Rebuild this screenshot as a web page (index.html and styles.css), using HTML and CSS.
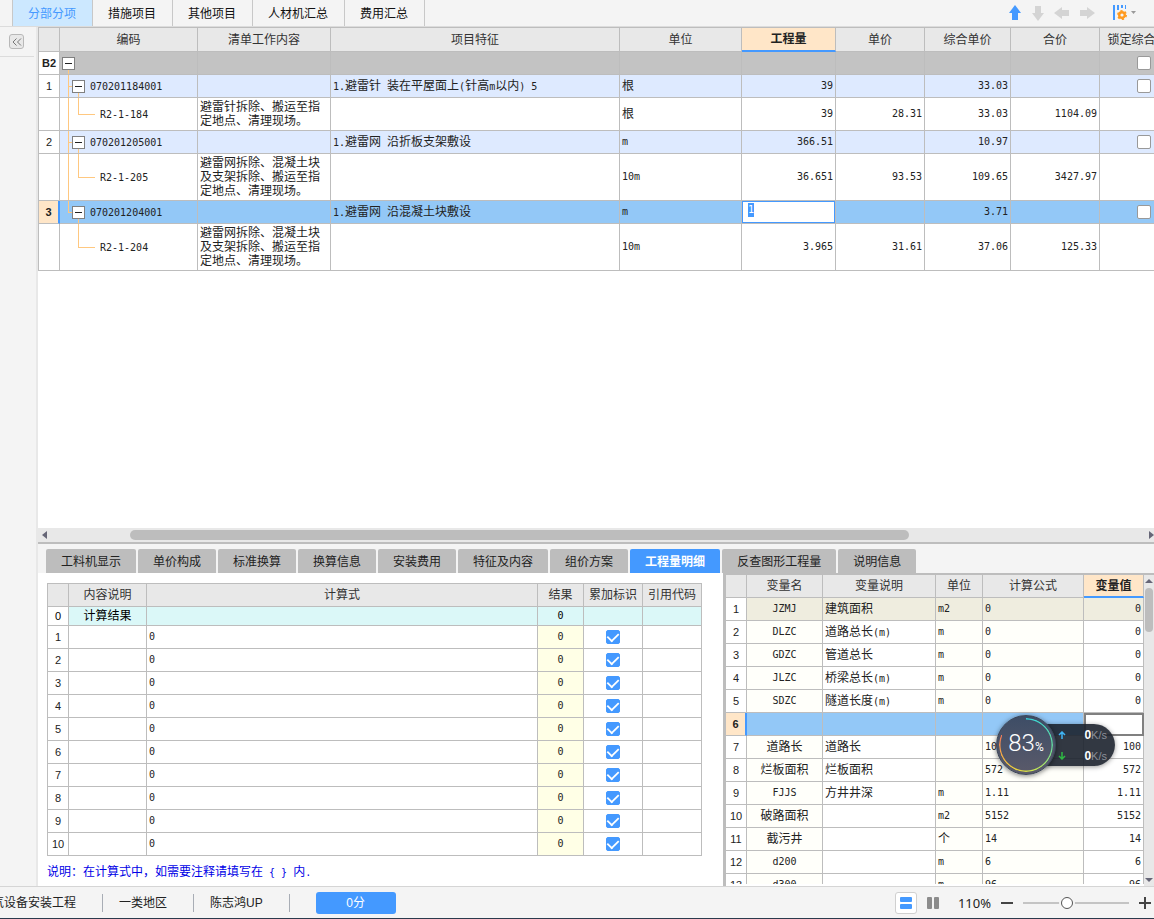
FILE: index.html
```html
<!DOCTYPE html>
<html lang="zh-CN">
<head>
<meta charset="utf-8">
<title>工程计价</title>
<link rel="stylesheet" href="styles.css">
</head>
<body>
<div class="app">
  <header class="topbar">
    <nav class="main-tabs">
      <button class="main-tab active">分部分项</button>
      <button class="main-tab">措施项目</button>
      <button class="main-tab">其他项目</button>
      <button class="main-tab">人材机汇总</button>
      <button class="main-tab">费用汇总</button>
    </nav>
    <div class="tools">
      <button class="tool on" aria-label="上移"><svg width="14" height="16" viewBox="0 0 14 16"><path d="M7 0L13 8H10V15H4V8H1Z"/></svg></button>
      <button class="tool" aria-label="下移"><svg width="14" height="16" viewBox="0 0 14 16"><path d="M4 1H10V8H13L7 16L1 8H4Z"/></svg></button>
      <button class="tool" aria-label="左移"><svg width="16" height="14" viewBox="0 0 16 14"><path d="M0 7L8 1V4H15V10H8V13Z"/></svg></button>
      <button class="tool" aria-label="右移"><svg width="16" height="14" viewBox="0 0 16 14"><path d="M16 7L8 1V4H1V10H8V13Z"/></svg></button>
      <button class="tool columns" aria-label="列设置"><svg width="26" height="16" viewBox="0 0 26 16"><path fill="#4499ff" d="M1 0H3V15H1ZM5 0H7V5H5ZM9 0H11V3H9ZM13 0H14V4H13Z"/><g fill="none" stroke="#ff9a1f"><circle cx="10" cy="10" r="2.8" stroke-width="2.4"/><circle cx="10" cy="10" r="4.2" stroke-width="1.6" stroke-dasharray="2.2 2.2"/></g><path fill="#999" d="M19 6H24L21.500 9Z"/></svg></button>
    </div>
  </header>

  <div class="middle">
    <aside class="side">
      <div class="side-head"><button class="collapse" aria-label="展开"><svg width="10" height="8" viewBox="0 0 10 8" fill="none" stroke="#777"><path d="M4.500 0.500L1 4L4.500 7.500M9 0.500L5.500 4L9 7.500"/></svg></button></div>
    </aside>

    <main class="work">
      <section class="upper">
        <table class="grid bill">
          <colgroup><col class="w21"><col class="w138"><col class="w133"><col class="w289"><col class="w122"><col class="w94"><col class="w89"><col class="w86"><col class="w89"><col class="w88"></colgroup>
          <thead><tr><th></th><th>编码</th><th>清单工作内容</th><th>项目特征</th><th>单位</th><th class="current">工程量</th><th>单价</th><th>综合单价</th><th>合价</th><th>锁定综合单价</th></tr></thead>
          <tbody>
            <tr class="section"><td class="idx strong">B2</td><td class="tree root"><button class="toggle" aria-label="折叠"></button></td><td></td><td></td><td></td><td></td><td></td><td></td><td></td><td class="mid"><input type="checkbox" aria-label="锁定"></td></tr>
            <tr class="item"><td class="idx">1</td><td class="tree node"><button class="toggle" aria-label="折叠"></button><span class="num">070201184001</span></td><td></td><td><span class="num">1.</span>避雷针<span class="num"> </span>装在平屋面上<span class="num">(</span>针高<span class="num">m</span>以内<span class="num">) 5</span></td><td>根</td><td class="num right">39</td><td></td><td class="num right">33.03</td><td></td><td class="mid"><input type="checkbox" aria-label="锁定"></td></tr>
            <tr class="sub two"><td class="idx"></td><td class="tree leaf"><span class="num">R2-1-184</span></td><td>避雷针拆除、搬运至指定地点、清理现场。</td><td></td><td>根</td><td class="num right">39</td><td class="num right">28.31</td><td class="num right">33.03</td><td class="num right">1104.09</td><td></td></tr>
            <tr class="item"><td class="idx">2</td><td class="tree node"><button class="toggle" aria-label="折叠"></button><span class="num">070201205001</span></td><td></td><td><span class="num">1.</span>避雷网<span class="num"> </span>沿折板支架敷设</td><td class="num">m</td><td class="num right">366.51</td><td></td><td class="num right">10.97</td><td></td><td class="mid"><input type="checkbox" aria-label="锁定"></td></tr>
            <tr class="sub three"><td class="idx"></td><td class="tree leaf"><span class="num">R2-1-205</span></td><td>避雷网拆除、混凝土块及支架拆除、搬运至指定地点、清理现场。</td><td></td><td class="num">10m</td><td class="num right">36.651</td><td class="num right">93.53</td><td class="num right">109.65</td><td class="num right">3427.97</td><td></td></tr>
            <tr class="item picked"><td class="idx strong">3</td><td class="tree node last"><button class="toggle" aria-label="折叠"></button><span class="num">070201204001</span></td><td></td><td><span class="num">1.</span>避雷网<span class="num"> </span>沿混凝土块敷设</td><td class="num">m</td><td class="editing"><input class="cell-input" type="text" value="1" aria-label="工程量"></td><td></td><td class="num right">3.71</td><td></td><td class="mid"><input type="checkbox" aria-label="锁定"></td></tr>
            <tr class="sub three"><td class="idx"></td><td class="tree leaf end"><span class="num">R2-1-204</span></td><td>避雷网拆除、混凝土块及支架拆除、搬运至指定地点、清理现场。</td><td></td><td class="num">10m</td><td class="num right">3.965</td><td class="num right">31.61</td><td class="num right">37.06</td><td class="num right">125.33</td><td></td></tr>
          </tbody>
        </table>
      </section>

      <div class="hscroll">
        <svg width="5" height="8" viewBox="0 0 5 8"><path d="M5 0V8L0 4Z"/></svg>
        <div class="htrack"><div class="hthumb"></div></div>
        <svg width="5" height="8" viewBox="0 0 5 8"><path d="M0 0V8L5 4Z"/></svg>
      </div>

      <section class="lower">
        <nav class="sub-tabs">
          <button class="sub-tab">工料机显示</button><button class="sub-tab">单价构成</button><button class="sub-tab">标准换算</button><button class="sub-tab">换算信息</button><button class="sub-tab">安装费用</button><button class="sub-tab">特征及内容</button><button class="sub-tab">组价方案</button><button class="sub-tab active">工程量明细</button><button class="sub-tab">反查图形工程量</button><button class="sub-tab">说明信息</button>
        </nav>
        <div class="panes">
          <div class="detail">
            <table class="grid calc">
              <colgroup><col class="w21"><col class="w78"><col><col class="w46"><col class="w59"><col class="w59"></colgroup>
              <thead><tr><th></th><th>内容说明</th><th>计算式</th><th>结果</th><th>累加标识</th><th>引用代码</th></tr></thead>
              <tbody>
                <tr class="total"><td class="idx">0</td><td class="mid">计算结果</td><td></td><td class="num mid">0</td><td></td><td></td></tr>
                <tr><td class="idx">1</td><td></td><td class="num">0</td><td class="num result">0</td><td class="mid"><input type="checkbox" checked aria-label="累加标识"></td><td></td></tr>
                <tr><td class="idx">2</td><td></td><td class="num">0</td><td class="num result">0</td><td class="mid"><input type="checkbox" checked aria-label="累加标识"></td><td></td></tr>
                <tr><td class="idx">3</td><td></td><td class="num">0</td><td class="num result">0</td><td class="mid"><input type="checkbox" checked aria-label="累加标识"></td><td></td></tr>
                <tr><td class="idx">4</td><td></td><td class="num">0</td><td class="num result">0</td><td class="mid"><input type="checkbox" checked aria-label="累加标识"></td><td></td></tr>
                <tr><td class="idx">5</td><td></td><td class="num">0</td><td class="num result">0</td><td class="mid"><input type="checkbox" checked aria-label="累加标识"></td><td></td></tr>
                <tr><td class="idx">6</td><td></td><td class="num">0</td><td class="num result">0</td><td class="mid"><input type="checkbox" checked aria-label="累加标识"></td><td></td></tr>
                <tr><td class="idx">7</td><td></td><td class="num">0</td><td class="num result">0</td><td class="mid"><input type="checkbox" checked aria-label="累加标识"></td><td></td></tr>
                <tr><td class="idx">8</td><td></td><td class="num">0</td><td class="num result">0</td><td class="mid"><input type="checkbox" checked aria-label="累加标识"></td><td></td></tr>
                <tr><td class="idx">9</td><td></td><td class="num">0</td><td class="num result">0</td><td class="mid"><input type="checkbox" checked aria-label="累加标识"></td><td></td></tr>
                <tr><td class="idx">10</td><td></td><td class="num">0</td><td class="num result">0</td><td class="mid"><input type="checkbox" checked aria-label="累加标识"></td><td></td></tr>
              </tbody>
            </table>
            <p class="note">说明：在计算式中，如需要注释请填写在<span class="num"> { } </span>内<span class="num">.</span></p>
          </div>

          <div class="vars">
            <div class="vars-view">
              <table class="grid var">
                <colgroup><col class="w21"><col class="w76"><col class="w113"><col class="w47"><col class="w101"><col class="w60"></colgroup>
                <thead><tr><th></th><th>变量名</th><th>变量说明</th><th>单位</th><th>计算公式</th><th class="current">变量值</th></tr></thead>
                <tbody>
                  <tr class="first"><td class="idx">1</td><td class="num">JZMJ</td><td>建筑面积</td><td class="num">m2</td><td class="num">0</td><td class="num">0</td></tr>
                  <tr><td class="idx">2</td><td class="num">DLZC</td><td>道路总长<span class="num">(m)</span></td><td class="num">m</td><td class="num">0</td><td class="num">0</td></tr>
                  <tr><td class="idx">3</td><td class="num">GDZC</td><td>管道总长</td><td class="num">m</td><td class="num">0</td><td class="num">0</td></tr>
                  <tr><td class="idx">4</td><td class="num">JLZC</td><td>桥梁总长<span class="num">(m)</span></td><td class="num">m</td><td class="num">0</td><td class="num">0</td></tr>
                  <tr><td class="idx">5</td><td class="num">SDZC</td><td>隧道长度<span class="num">(m)</span></td><td class="num">m</td><td class="num">0</td><td class="num">0</td></tr>
                  <tr class="picked"><td class="idx strong">6</td><td></td><td></td><td></td><td></td><td class="focus"></td></tr>
                  <tr><td class="idx">7</td><td>道路长</td><td>道路长</td><td></td><td class="num">100</td><td class="num">100</td></tr>
                  <tr><td class="idx">8</td><td>烂板面积</td><td>烂板面积</td><td></td><td class="num">572</td><td class="num">572</td></tr>
                  <tr><td class="idx">9</td><td class="num">FJJS</td><td>方井井深</td><td class="num">m</td><td class="num">1.11</td><td class="num">1.11</td></tr>
                  <tr><td class="idx">10</td><td>破路面积</td><td></td><td class="num">m2</td><td class="num">5152</td><td class="num">5152</td></tr>
                  <tr><td class="idx">11</td><td>截污井</td><td></td><td>个</td><td class="num">14</td><td class="num">14</td></tr>
                  <tr><td class="idx">12</td><td class="num">d200</td><td></td><td class="num">m</td><td class="num">6</td><td class="num">6</td></tr>
                  <tr><td class="idx">13</td><td class="num">d300</td><td></td><td class="num">m</td><td class="num">96</td><td class="num">96</td></tr>
                </tbody>
              </table>
            </div>
            <div class="vscroll">
              <svg width="8" height="4" viewBox="0 0 8 4"><path d="M0 4H8L4 0Z"/></svg>
              <div class="vtrack"><div class="vthumb"></div></div>
              <svg width="8" height="4" viewBox="0 0 8 4"><path d="M0 0H8L4 4Z"/></svg>
            </div>
          </div>
        </div>
      </section>
    </main>
  </div>

  <footer class="status">
    <div class="status-left">
      <span class="crumb first-crumb">气设备安装工程</span>
      <span class="crumb">一类地区</span>
      <span class="crumb">陈志鸿UP</span>
      <button class="score">0分</button>
    </div>
    <div class="status-right">
      <button class="view on" aria-label="上下布局"><svg width="12" height="12" viewBox="0 0 12 12" fill="#4499ff"><rect width="12" height="5" rx="1"/><rect y="7" width="12" height="5" rx="1"/></svg></button>
      <button class="view" aria-label="左右布局"><svg width="12" height="12" viewBox="0 0 12 12" fill="#8c8c8c"><rect width="5" height="12" rx="1"/><rect x="7" width="5" height="12" rx="1"/></svg></button>
      <span class="zoom">110%</span>
      <button class="step" aria-label="缩小"><svg width="12" height="12" viewBox="0 0 12 12" stroke="#444" stroke-width="2"><path d="M0 6H12"/></svg></button>
      <input class="slider" type="range" min="0" max="100" value="40" aria-label="缩放">
      <button class="step" aria-label="放大"><svg width="12" height="12" viewBox="0 0 12 12" stroke="#444" stroke-width="2"><path d="M0 6H12M6 0V12"/></svg></button>
    </div>
  </footer>

  <div class="meter">
    <div class="rates">
      <div class="rate"><svg width="8" height="8" viewBox="0 0 8 8" fill="none" stroke="#3fb4f5" stroke-width="1.500"><path d="M4 8V1M1 4L4 1L7 4"/></svg><span><b>0</b>K/s</span></div>
      <div class="rate"><svg width="8" height="8" viewBox="0 0 8 8" fill="none" stroke="#2fb944" stroke-width="1.500"><path d="M4 0V7M1 4L4 7L7 4"/></svg><span><b>0</b>K/s</span></div>
    </div>
    <div class="dial">
      <div class="ring"></div>
      <div class="reading">83<small>%</small></div>
    </div>
  </div>
</div>
</body>
</html>
```
FILE: styles.css
```css
* { box-sizing: border-box; }

body {
  margin: 0;
  font-family: "Liberation Sans", "Noto Sans CJK SC", sans-serif;
  font-size: 12px;
  line-height: 14px;
  color: #222;
}

button, input { font: inherit; color: inherit; margin: 0; }
button { border: 0; padding: 0; background: none; }
svg { display: block; }

.app {
  position: relative;
  display: flex;
  flex-direction: column;
  height: 100vh;
  overflow: hidden;
  background: #f4f4f4;
}

/* Top bar */
.topbar {
  display: flex;
  justify-content: space-between;
  flex: none;
  height: 27px;
  padding-left: 12px;
  border-bottom: 1px solid #dcdcdc;
}
.main-tabs { display: flex; border-left: 1px solid #c8c8c8; }
.main-tab {
  padding: 2px 16px 0 15px;
  border-right: 1px solid #c8c8c8;
  color: #111;
}
.main-tab.active { background: #cce8ff; color: #4499ff; }
.tools { display: flex; align-items: center; gap: 9px; padding-right: 16px; }
.tool { fill: #d4d4d4; }
.tool.on { fill: #4499ff; }
.columns { margin-left: 8px; }

/* Frame */
.middle { display: flex; flex: 1; min-height: 0; }
.side { flex: none; width: 38px; border-right: 2px solid #e8e8e8; }
.side-head { width: 34px; height: 30px; padding: 7px 9px; border-bottom: 1px solid #dcdcdc; }
.collapse {
  display: grid;
  place-items: center;
  width: 15px;
  height: 15px;
  border: 1px solid #b8b8b8;
  border-radius: 3px;
  background: #e8e8e8;
}
.work { display: flex; flex-direction: column; flex: 1; min-width: 0; }
.upper { flex: 1; min-height: 0; overflow: hidden; background: #fff; }

/* Grids */
.grid {
  table-layout: fixed;
  border-collapse: separate;
  border-spacing: 0;
  border-top: 1px solid #bdbdbd;
  border-left: 1px solid #bdbdbd;
}
.grid th, .grid td {
  height: 23px;
  padding: 0 2px;
  border-right: 1px solid #bdbdbd;
  border-bottom: 1px solid #bdbdbd;
  white-space: nowrap;
  overflow: hidden;
}
.grid th { padding: 0; background: #e8e8e8; font-weight: normal; color: #333; }
.grid th.current {
  background: #ffe6c8;
  border-bottom: 2px solid #4499ff;
  font-weight: bold;
  color: #222;
}
.grid td { text-align: left; }
.grid .idx {
  padding: 0;
  background: #fff;
  text-align: center;
  font-size: 11px;
}
.grid .idx.strong { font-weight: bold; }
.grid .mid, .grid .result { text-align: center; }
.grid .right { text-align: right; }
.grid .result { background: #ffffe6; }
.num { font-family: "DejaVu Sans Mono", monospace; font-size: 10px; white-space: pre; }

.w21 { width: 21px; }
.w46 { width: 46px; }
.w47 { width: 47px; }
.w59 { width: 59px; }
.w60 { width: 60px; }
.w76 { width: 76px; }
.w78 { width: 78px; }
.w86 { width: 86px; }
.w88 { width: 88px; }
.w89 { width: 89px; }
.w94 { width: 94px; }
.w101 { width: 101px; }
.w113 { width: 113px; }
.w122 { width: 122px; }
.w133 { width: 133px; }
.w138 { width: 138px; }
.w289 { width: 289px; }

.bill { width: 1150px; }
.bill th { height: 24px; }
.section { background: #c3c3c3; }
.item { background: #deeaff; }
.item.picked, .picked { background: #93c8f7; }
.grid .picked .idx { background: #ffe6c8; border-right: 2px solid #4499ff; }
.bill .sub td { white-space: normal; }
.bill .two td { height: 33px; }
.bill .three td { height: 47px; }

/* Tree guides are drawn as cell backgrounds */
.bill .tree { background-repeat: no-repeat; padding: 0; }
.toggle {
  display: inline-block;
  width: 13px;
  height: 13px;
  border: 1px solid #808080;
  background: linear-gradient(#222, #222) center / 7px 1px no-repeat #fff;
  vertical-align: middle;
}
.root .toggle { margin-left: 2px; }
.node .toggle { margin: 0 5px 0 12px; }
.node .num { vertical-align: middle; }
.root {
  background-image: linear-gradient(#ffc880, #ffc880);
  background-size: 1px 50%;
  background-position: 8px 100%;
}
.node {
  background-image: linear-gradient(#ffc880, #ffc880), linear-gradient(#ffc880, #ffc880), linear-gradient(#ffc880, #ffc880);
  background-size: 1px 100%, 4px 1px, 1px 50%;
  background-position: 8px 0, 8px 50%, 18px 100%;
}
.node.last { background-size: 1px 50%, 4px 1px, 1px 50%; }
.bill .leaf {
  padding-left: 40px;
  background-image: linear-gradient(#ffc880, #ffc880), linear-gradient(#ffc880, #ffc880), linear-gradient(#ffc880, #ffc880);
  background-size: 1px 50%, 17px 1px, 1px 100%;
  background-position: 18px 0, 18px 50%, 8px 0;
}
.bill .leaf.end { background-size: 1px 50%, 17px 1px, 0 0; }

.grid .editing { padding: 0; background: #fff; }
.cell-input {
  display: block;
  width: 100%;
  height: 22px;
  padding: 0 0 6px 5px;
  border: 1px solid #4499ff;
  outline: 0;
  background: linear-gradient(#4499ff, #4499ff) 5px 1px / 6px 14px no-repeat #fff;
  font-family: "DejaVu Sans Mono", monospace;
  font-size: 10px;
  color: #fff;
}

input[type="checkbox"] {
  appearance: none;
  display: inline-grid;
  place-items: center;
  width: 14px;
  height: 14px;
  border: 1px solid #999;
  border-radius: 2px;
  background: #fff;
  vertical-align: middle;
}
input[type="checkbox"]:checked { border-color: #4499ff; background: #4499ff; }
input[type="checkbox"]:checked::before {
  content: "";
  width: 10px;
  height: 6px;
  margin-bottom: 3px;
  border-left: 2px solid #fff;
  border-bottom: 2px solid #fff;
  transform: rotate(-45deg) scale(0.9);
}

/* Scroll bars */
.hscroll {
  display: flex;
  align-items: center;
  flex: none;
  height: 16px;
  padding-left: 4px;
  border-bottom: 2px solid #bdbdbd;
  background: #e8e8e8;
  fill: #667;
}
.htrack { flex: 1; padding: 0 21.6% 0 7.5%; }
.hthumb { height: 10px; border-radius: 5px; background: #bdbdbd; }
.vscroll {
  display: flex;
  flex-direction: column;
  align-items: center;
  flex: none;
  width: 10px;
  padding: 4px 0;
  background: #e8e8e8;
  fill: #667;
}
.vtrack { flex: 1; width: 8px; padding-top: 5px; }
.vthumb { height: 44px; border-radius: 4px; background: #bdbdbd; }

/* Lower panel */
.lower { display: flex; flex-direction: column; flex: none; height: 342px; }
.sub-tabs { display: flex; flex: none; gap: 2px; padding: 5px 8px 0; height: 29px; }
.sub-tab {
  padding: 2px 15px 0;
  border-radius: 2px 2px 0 0;
  background: #bdbdbd;
  white-space: nowrap;
}
.sub-tab.active { background: #4499ff; color: #fff; font-weight: bold; }
.panes { display: flex; flex: 1; min-height: 0; background: #fff; }
.detail { flex: 1; min-width: 0; padding: 10px 21px 0 9px; }
.calc { width: 100%; }
.total { background: #dbf8f8; color: #000; }
.calc .total td { height: 19px; }
.note { margin: 8px 0 0; line-height: 16px; color: #0000e6; }

.vars {
  display: flex;
  flex: none;
  width: 431px;
  border-left: 3px solid #bdbdbd;
  border-top: 2px solid #bdbdbd;
}
.vars-view { flex: 1; overflow: hidden; margin-bottom: 2px; }
.var { width: 418px; border: 0; }
.var tr { background: #fffffa; }
.var td:nth-child(2) { text-align: center; }
.var td:last-child { text-align: right; background: #fff; }
.var td:nth-child(3) { background: #fff; }
.var .first td:not(.idx) { background: #efeddf; }
.var tr.picked, .var .picked td:not(.idx) { background: #93c8f7; }
.var .picked td.focus:last-child { background: #fff; border: 2px solid #808080; }

/* Status bar */
.status {
  display: flex;
  justify-content: space-between;
  align-items: center;
  flex: none;
  height: 33px;
  border-top: 1px solid #d5d5d5;
  border-bottom: 1px solid #2b3a4d;
}
.status-left { display: flex; align-items: center; }
.crumb { padding: 2px 26px 2px 16px; border-right: 1px solid #a8adb5; }
.first-crumb { padding-left: 0; margin-left: -8px; }
.score {
  width: 80px;
  height: 22px;
  margin-left: 26px;
  border-radius: 3px;
  background: #4499ff;
  color: #fff;
}
.status-right { display: flex; align-items: center; gap: 10px; padding-right: 3px; }
.view { display: grid; place-items: center; height: 22px; }
.view.on { width: 22px; border: 1px solid #d0d0d0; border-radius: 3px; background: #fff; }
.zoom { padding-left: 9px; font-family: "Noto Sans", sans-serif; font-size: 13px; }
.slider { appearance: none; width: 106px; height: 14px; background: linear-gradient(#c4c4c4, #c4c4c4) center / 100% 2px no-repeat; }
.slider::-webkit-slider-thumb {
  appearance: none;
  width: 12px;
  height: 12px;
  border: 1px solid #555;
  border-radius: 50%;
  background: #fff;
  box-shadow: 0 0 0 2px #f4f4f4;
}

/* Floating memory and network meter */
.meter { position: absolute; right: 39px; bottom: 143px; width: 119px; height: 61px; }
.rates {
  position: absolute;
  inset: 9px 0 10px 30px;
  display: grid;
  grid-template-rows: 1fr 1fr;
  padding: 0 8px 0 32px;
  border-radius: 0 21px 21px 0;
  background: rgba(28, 34, 46, 0.9);
  box-shadow: 0 1px 5px rgba(0, 0, 0, 0.4);
  color: #8b8f99;
  font-size: 11px;
}
.rate { display: flex; align-items: center; justify-content: space-between; }
.rate b { color: #fff; font-size: 12px; }
.dial {
  position: absolute;
  left: 0;
  top: 0;
  display: grid;
  place-items: center;
  width: 60px;
  height: 60px;
  border: 1px solid #3c4658;
  border-radius: 50%;
  background: linear-gradient(#3d4d66, #5a5a6a);
  box-shadow: 0 1px 5px rgba(0, 0, 0, 0.5);
}
.ring {
  grid-area: 1 / 1;
  width: 54px;
  height: 54px;
  border-radius: 50%;
  background: conic-gradient(#35d8e0, #62dca0 25%, #c8e850 45%, #f2d23a 58%, #f5a04a 72%, #f0785a 81%, transparent 81%);
  mask: radial-gradient(closest-side, transparent 25px, #000 26px);
}
.reading { grid-area: 1 / 1; color: #fff; font-family: Roboto, sans-serif; font-weight: 300; font-size: 24px; line-height: 28px; }
.reading small { font-size: 12px; font-weight: 400; }
```
